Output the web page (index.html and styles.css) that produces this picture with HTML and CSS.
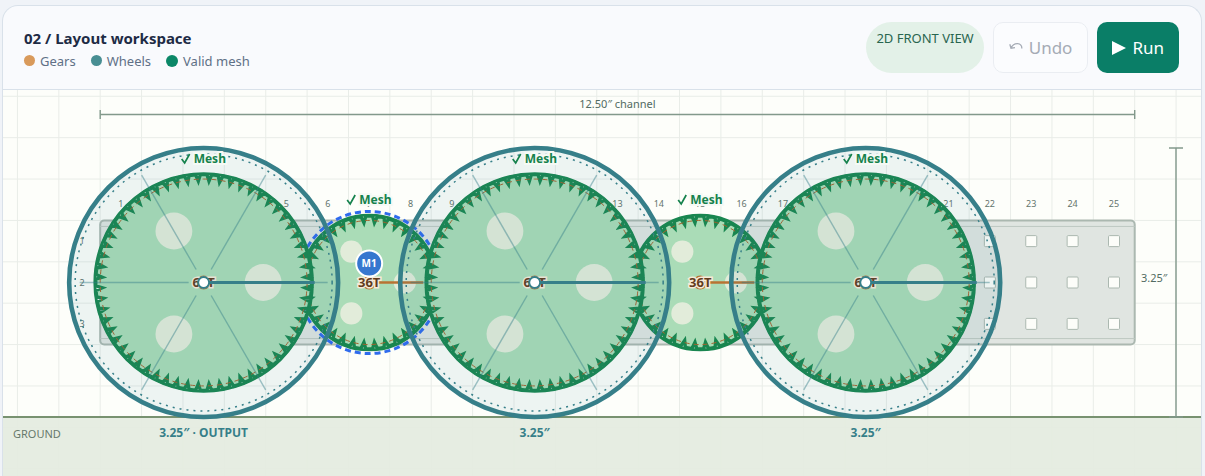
FILE: index.html
```html
<!DOCTYPE html>
<html lang="en">
<head>
<meta charset="utf-8">
<title>Layout workspace</title>
<link rel="stylesheet" href="styles.css">
</head>
<body>
<section class="workspace">
  <header class="toolbar">
    <div class="heading">
      <h2 class="title">02 / Layout workspace</h2>
      <ul class="legend">
        <li class="legend-item"><span class="dot dot-gear"></span>Gears</li>
        <li class="legend-item"><span class="dot dot-wheel"></span>Wheels</li>
        <li class="legend-item"><span class="dot dot-mesh"></span>Valid mesh</li>
      </ul>
    </div>
    <div class="actions">
      <span class="view-pill">2D FRONT VIEW</span>
      <button class="btn btn-undo" type="button" disabled>
        <svg class="undo-icon" viewBox="0 0 14 10" aria-hidden="true"><path d="M.8 2.200L2 6.200L6 5.600M2 6C3.400 3 6 1.600 8.600 1.700c2.800.1 4.400 2 4.200 4.800"/></svg>
        Undo
      </button>
      <button class="btn btn-run" type="button">
        <svg class="run-icon" viewBox="0 0 14 14" aria-hidden="true"><path d="M0 0L14 7L0 14z"/></svg>
        Run
      </button>
    </div>
  </header>
  <svg class="stage" id="stage" viewBox="3 90 1198 386" role="img" aria-label="Gear train layout"></svg>
</section>
<script src="app.js"></script>
</body>
</html>
```
FILE: styles.css
```css
* { box-sizing: border-box; }

body {
  margin: 0;
  padding: 5px 3px 0 2px;
  background: #f0f3f8;
  color: #1e2b45;
  font-family: "Segoe UI", "Noto Sans", "Open Sans", sans-serif;
  overflow: hidden;
}

.workspace {
  border: 1px solid #d9e1ea;
  border-bottom: 0;
  border-radius: 16px 16px 0 0;
  background: #f9fafd;
  overflow: hidden;
}

.toolbar {
  display: flex;
  justify-content: space-between;
  align-items: center;
  padding: 16px 22px 16px 21px;
  border-bottom: 1px solid #d9e1ea;
}

.heading { padding-top: 2px; }

.title {
  margin: 0;
  font-size: 15px;
  line-height: 24px;
  font-weight: 700;
}

.legend {
  display: flex;
  gap: 15px;
  margin: 0;
  padding: 0;
  list-style: none;
  color: #607086;
  font-size: 13px;
  line-height: 22px;
}

.legend-item {
  display: flex;
  align-items: center;
  gap: 5px;
}

.dot {
  width: 11px;
  height: 11px;
  border-radius: 50%;
}

.dot-gear { background: #d99a5b; }
.dot-wheel { background: #488e93; }
.dot-mesh { width: 12px; height: 12px; background: #0b8767; }

.actions {
  display: flex;
  gap: 9px;
}

.view-pill {
  padding: 6px 10px;
  border-radius: 26px;
  background: #e3f1e8;
  color: #29664f;
  font-size: 13px;
  line-height: 20px;
}

.btn {
  display: flex;
  align-items: center;
  gap: 6px;
  height: 51px;
  padding: 0 14px;
  border: 1px solid transparent;
  border-radius: 10px;
  font-family: inherit;
  font-size: 17px;
  line-height: 24px;
}

.btn-undo {
  padding: 0 15px;
  border-color: #eaedf2;
  background: #fbfcfe;
  color: #a5abb5;
}

.btn-run {
  background: #0a7e67;
  color: #fff;
}

.undo-icon {
  width: 14px;
  height: 10px;
  margin-bottom: 2px;
  fill: none;
  stroke: currentColor;
  stroke-width: 1.3;
}

.run-icon {
  width: 14px;
  height: 14px;
  fill: currentColor;
}

.stage {
  display: block;
  width: 100%;
  height: auto;
  background: #fdfefa;
}

.grid-line { stroke: #e9ede8; stroke-width: 1; }
.ground { fill: #e4ebe0; fill-opacity: .92; }
.ground-line { stroke: #789270; stroke-width: 2; }

.dimension { stroke: #82998b; stroke-width: 1.4; }
.dim-text { fill: #526b62; font-size: 11px; }
.channel { fill: #e0e5e1; stroke: #abb8b0; stroke-width: 2; }
.channel-lip { stroke: #bec8c2; stroke-width: 1; }
.hole { fill: #fcfdf9; stroke: #abb8b0; stroke-width: 1; }
.index { fill: #64746c; font-size: 9px; text-anchor: middle; }

.gear { fill: #aadcb7; stroke: #198650; stroke-width: 3.4; stroke-linejoin: miter; stroke-miterlimit: 8; }
.gear-rim { fill: none; stroke: #198650; stroke-width: 2.8; }
.pitch { fill: none; stroke: #a5622f; stroke-width: 1; stroke-dasharray: 5 4; }
.lightening { fill: #e2ecda; }
.selection { fill: none; stroke: #2f6bed; stroke-width: 3; stroke-dasharray: 6 4; }
.gear-hub { fill: #f3e3cf; stroke: #b87333; stroke-width: 2; }
.gear-pointer { stroke: #b87333; stroke-width: 2.5; }

.wheel { fill: #367f9a; fill-opacity: .08; stroke: #367f89; stroke-width: 4.6; }
.tread { fill: none; stroke: #367f89; stroke-width: 1.5; stroke-dasharray: 2 5; }
.spoke { stroke: #367f89; stroke-width: 1.4; stroke-opacity: .45; }
.wheel-pointer { stroke: #367f89; stroke-width: 3; }
.wheel-hub { fill: #fff; stroke: #367f89; stroke-width: 2; }

.gear-label {
  fill: #633c1e;
  stroke: #f6ead8;
  stroke-width: 3;
  paint-order: stroke;
  font-size: 13px;
  font-weight: 700;
  text-anchor: middle;
}

.mesh-label {
  fill: #15824d;
  stroke: #f5faf5;
  stroke-width: 4;
  paint-order: stroke;
  font-size: 12px;
  font-weight: 700;
}

.mesh-tick { fill: none; stroke: #15824d; stroke-width: 1.7; }
.wheel-label { fill: #367f89; font-size: 12px; font-weight: 700; text-anchor: middle; }
.ground-label { fill: #66796c; font-size: 11px; }
.motor { fill: #3677cf; stroke: #fff; stroke-width: 2; }
.motor-text { fill: #fff; font-size: 10px; font-weight: 700; text-anchor: middle; }
.middle { text-anchor: middle; }
```
FILE: app.js
```js
const NS = 'http://www.w3.org/2000/svg';
const stage = document.getElementById('stage');

const INCH = 82.76;
const PITCH = INCH / 2;
const AXIS_Y = 282.5;
const LEFT = 100.2;
const RIGHT = LEFT + 25 * PITCH;
const GROUND_Y = 417;
const WHEEL_R = 1.625 * INCH;
const wheels = [1.25, 5.25, 9.25].map(i => LEFT + i * INCH);
const idlers = [3.25, 7.25].map(i => LEFT + i * INCH);

function add(tag, cls, attrs, text) {
  const el = document.createElementNS(NS, tag);
  el.setAttribute('class', cls);
  for (const key in attrs) el.setAttribute(key, attrs[key]);
  if (text) el.textContent = text;
  stage.appendChild(el);
}

const line = (cls, x1, y1, x2, y2) => add('line', cls, { x1, y1, x2, y2 });
const circle = (cls, cx, cy, r) => add('circle', cls, { cx, cy, r });
const text = (cls, x, y, value) => add('text', cls, { x, y }, value);

function polar(cx, r, degrees) {
  const a = degrees * Math.PI / 180;
  return [cx + r * Math.cos(a), AXIS_Y + r * Math.sin(a)];
}

function drawGrid() {
  for (let x = LEFT - 2 * PITCH; x < 1201; x += PITCH) line('grid-line', x, 90, x, 476);
  for (let y = AXIS_Y - 4.5 * PITCH; y < 476; y += PITCH) line('grid-line', 3, y, 1201, y);
}

function drawGround() {
  add('rect', 'ground', { x: 3, y: GROUND_Y, width: 1198, height: 60 });
  line('ground-line', 3, GROUND_Y, 1201, GROUND_Y);
}

function drawChannel() {
  const top = AXIS_Y - 1.5 * PITCH;
  const height = 3 * PITCH;
  add('rect', 'channel', { x: LEFT, y: top, width: RIGHT - LEFT, height, rx: 4 });
  line('channel-lip', LEFT, top + 6, RIGHT, top + 6);
  line('channel-lip', LEFT, top + height - 6, RIGHT, top + height - 6);
  for (let col = 0; col < 25; col++) {
    const x = LEFT + (col + 0.5) * PITCH;
    text('index', x, 207, String(col + 1));
    for (let row = -1; row < 2; row++) {
      add('rect', 'hole', { x: x - 5.5, y: AXIS_Y + row * PITCH - 5.5, width: 11, height: 11, rx: 1 });
    }
  }
  for (let row = 0; row < 3; row++) text('index', 82, AXIS_Y + (row - 1) * PITCH + 3, String(row + 1));
}

function drawGear(cx, teeth, selected) {
  const pitchR = teeth / 48 * INCH;
  const outer = pitchR + 4.5;
  const root = pitchR - 2;
  const step = 360 / teeth;
  const points = [];
  for (let i = 0; i < teeth; i++) {
    const a = i * step;
    points.push(polar(cx, outer, a - step * 0.29), polar(cx, outer, a + step * 0.29), polar(cx, root, a + step / 2));
  }
  add('path', 'gear', { d: 'M' + points.map(p => p.map(n => n.toFixed(2)).join(' ')).join('L') + 'Z' });
  circle('gear-rim', cx, AXIS_Y, pitchR + 5.4);
  circle('pitch', cx, AXIS_Y, pitchR);
  for (const a of [0, 120, 240]) {
    const [x, y] = polar(cx, pitchR * 0.575, a);
    circle('lightening', x, y, pitchR * 0.178);
  }
  if (selected) circle('selection', cx, AXIS_Y, pitchR + 9);
  circle('gear-hub', cx, AXIS_Y, 6);
  line('gear-pointer', cx, AXIS_Y, cx + pitchR - 8, AXIS_Y);
  text('gear-label', cx, AXIS_Y + 4, teeth + 'T');
}

function drawWheel(cx) {
  circle('wheel', cx, AXIS_Y, WHEEL_R);
  circle('tread', cx, AXIS_Y, WHEEL_R - 6);
  for (let a = 0; a < 360; a += 60) {
    line('spoke', ...polar(cx, 15, a), ...polar(cx, 124, a));
  }
  line('wheel-pointer', cx, AXIS_Y, cx + 111, AXIS_Y);
  circle('wheel-hub', cx, AXIS_Y, 5.5);
}

function drawMesh(cx, y) {
  text('mesh-label', cx - 10, y, 'Mesh');
  add('path', 'mesh-tick', { d: `M${cx - 22} ${y - 4}l3 4l5 -9` });
}

drawGrid();
drawGround();
drawChannel();

line('dimension', LEFT, 114.5, RIGHT, 114.5);
line('dimension', LEFT, 110, LEFT, 119);
line('dimension', RIGHT, 110, RIGHT, 119);
text('dim-text middle', (LEFT + RIGHT) / 2, 108, '12.50″ channel');
line('dimension', 1176, 148, 1176, GROUND_Y);
line('dimension', 1169, 148, 1183, 148);
line('dimension', 1169, GROUND_Y, 1183, GROUND_Y);
text('dim-text', 1141, 282, '3.25″');

idlers.forEach((cx, i) => drawGear(cx, 36, i === 0));
wheels.forEach(cx => drawGear(cx, 60, false));
wheels.forEach(drawWheel);
wheels.forEach((cx, i) => text('wheel-label', cx, 437, i ? '3.25″' : '3.25″ · OUTPUT'));
wheels.forEach(cx => drawMesh(cx, 163));
idlers.forEach(cx => drawMesh(cx, 204));

circle('motor', idlers[0], 263.5, 13);
text('motor-text', idlers[0], 267, 'M1');
text('ground-label', 13, 438, 'GROUND');
```
